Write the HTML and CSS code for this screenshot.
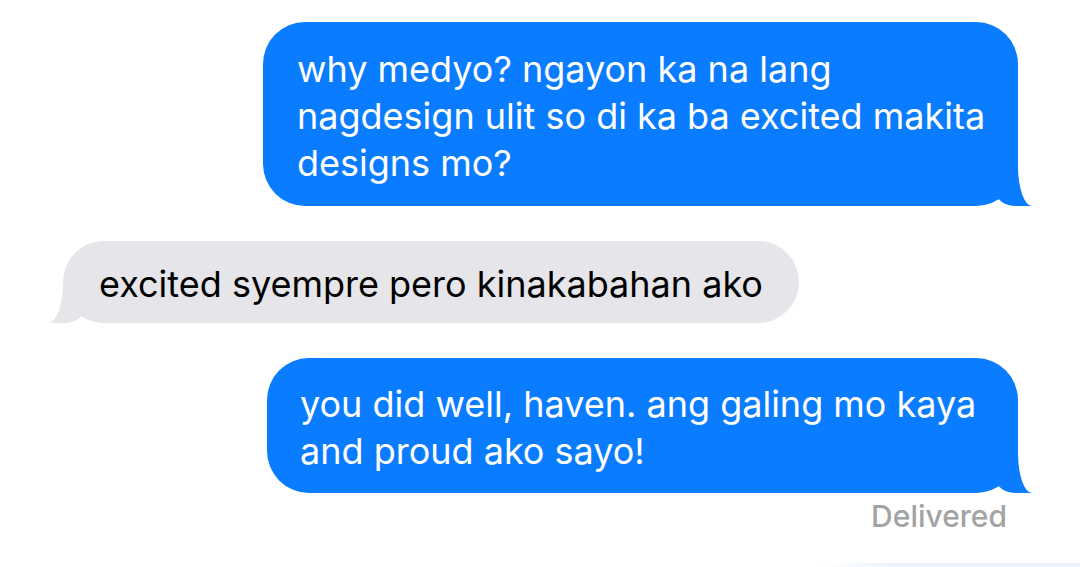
FILE: index.html
```html
<!DOCTYPE html>
<html>
<head>
    <meta name="viewport" content="width=device-width, initial-scale=1.0">
    <link rel="stylesheet" href="styles.css">
</head>
<body>
    <div class="thread">
        <div class="bubble sent first">why medyo? ngayon ka na lang nagdesign ulit so di ka ba excited makita designs mo?</div>

        <div class="bubble received">excited syempre pero kinakabahan ako</div>

        <div class="bubble sent last">you did well, haven. ang galing mo kaya and proud ako sayo!</div>

        <div class="status">Delivered</div>
        <div class="edge"></div>
    </div>
</body>
</html>
```

FILE: styles.css
```css
* {
    box-sizing: border-box;
    margin: 0;
    padding: 0;
}

body {
    font-family: Inter, "Open Sans", sans-serif;
    background-color: #fff;
    width: 1080px;
    height: 567px;
    overflow: hidden;
}

.thread {
    display: flex;
    flex-direction: column;
    padding-top: 22px;
}

.bubble {
    position: relative;
    font-size: 36px;
    line-height: 47px;
    border-radius: 42px;
}

.sent {
    align-self: flex-end;
    margin-right: 62px;
    background-color: #0a7cff;
    color: #fff;
}

.first {
    width: 755px;
    padding: 24px 30px 19px 34px;
}

.last {
    width: 751px;
    margin-top: 35px;
    padding: 23px 30px 18px 33px;
}

.received {
    align-self: flex-start;
    margin-left: 63px;
    margin-top: 35px;
    padding: 20px 36px 15px 36px;
    background-color: #e5e5ea;
    color: #000;
}

/* tails */
.bubble::before,
.bubble::after {
    content: "";
    position: absolute;
    bottom: 0;
    height: 42px;
}

.sent::before {
    right: -14px;
    width: 36px;
    background-color: #0a7cff;
    border-bottom-left-radius: 20px 14px;
}

.sent::after {
    right: -40px;
    width: 40px;
    background-color: #fff;
    border-bottom-left-radius: 14px 40px;
}

.received::before {
    left: -15px;
    width: 36px;
    background-color: #e5e5ea;
    border-bottom-right-radius: 20px 14px;
}

.received::after {
    left: -40px;
    width: 40px;
    background-color: #fff;
    border-bottom-right-radius: 15px 40px;
}

.status {
    align-self: flex-end;
    margin-right: 73px;
    margin-top: 5px;
    font-size: 30px;
    line-height: 36px;
    font-weight: 500;
    color: #a3a3a3;
}

.edge {
    align-self: flex-end;
    margin-top: 29px;
    width: 260px;
    height: 4px;
    background: linear-gradient(to right, #fff, #eaf2fc 30%, #eaf2fc);
}
```
